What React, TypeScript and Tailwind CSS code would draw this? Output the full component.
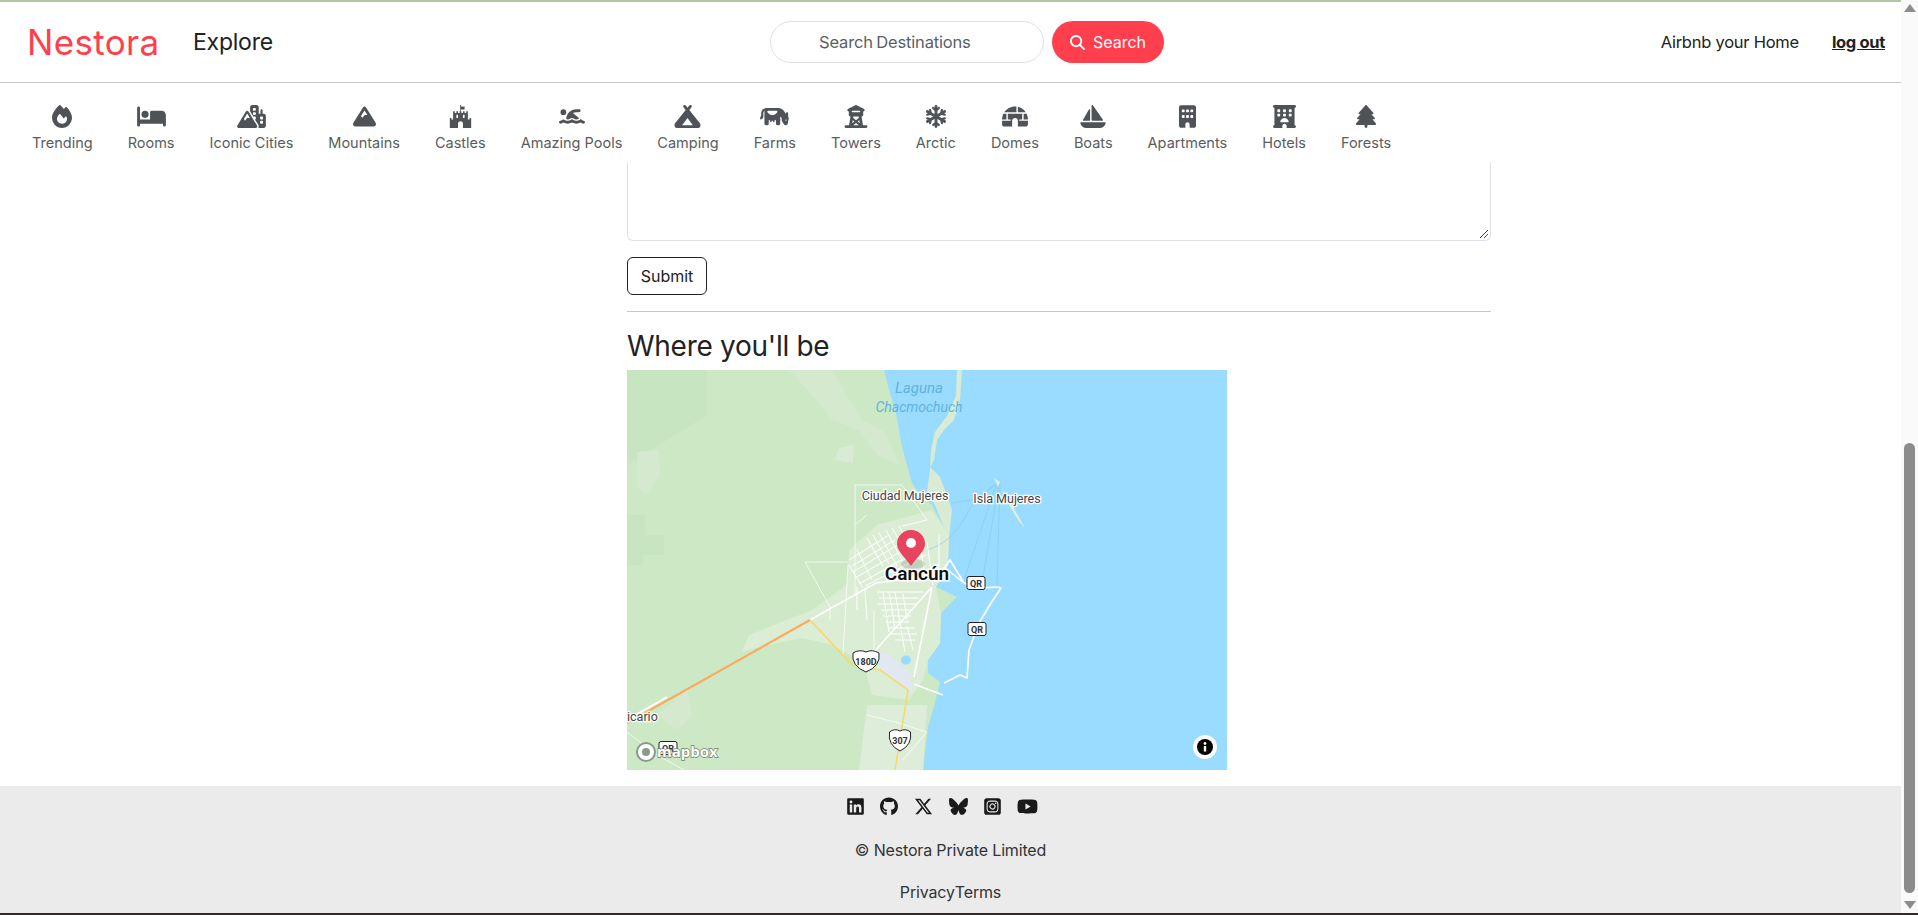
import React from "react";
import {
  FaFire, FaBed, FaMountainCity, FaMountain, FaFortAwesome, FaPersonSwimming, FaCampground, FaCow,
  FaTowerObservation, FaSnowflake, FaIgloo, FaSailboat, FaBuilding, FaHotel, FaTree, FaMagnifyingGlass,
  FaLinkedin, FaGithub, FaXTwitter, FaBluesky, FaSquareInstagram, FaYoutube,
} from "react-icons/fa6";

const cats: [React.ComponentType<{ className?: string }>, string, string][] = [
  [FaFire, "Trending", "w-[20px]"], [FaBed, "Rooms", "w-[29px]"], [FaMountainCity, "Iconic Cities", "w-[29px]"], [FaMountain, "Mountains", "w-[23px]"],
  [FaFortAwesome, "Castles", "w-[23px]"], [FaPersonSwimming, "Amazing Pools", "w-[26px]"], [FaCampground, "Camping", "w-[29px]"], [FaCow, "Farms", "w-[29px]"],
  [FaTowerObservation, "Towers", "w-[26px]"], [FaSnowflake, "Arctic", "w-[20px]"], [FaIgloo, "Domes", "w-[26px]"], [FaSailboat, "Boats", "w-[26px]"],
  [FaBuilding, "Apartments", "w-[17px]"], [FaHotel, "Hotels", "w-[23px]"], [FaTree, "Forests", "w-[20px]"],
];

const grid = [
  "M222 190 L262 165", "M225 196 L268 170", "M226 202 L272 174", "M228 208 L280 178", "M232 214 L292 180", "M238 216 L300 184",
  "M240 168 L256 196", "M246 165 L262 194", "M252 163 L270 196", "M259 160 L276 192", "M265 158 L285 192", "M272 156 L290 190",
  "M230 180 L245 210", "M222 195 L236 218", "M275 156 L300 150", "M300 172 L306 215", "M312 165 L312 205", "M292 168 L298 205",
  "M250 222 L296 222", "M252 228 L292 228", "M250 234 L290 234", "M254 240 L286 240", "M256 246 L284 246", "M258 252 L282 252",
  "M262 258 L288 258", "M264 264 L290 264", "M268 270 L288 270", "M256 222 L262 262", "M262 222 L268 258", "M268 222 L274 258",
  "M276 224 L280 250", "M280 256 L286 280", "M274 260 L278 282", "M230 217 V240", "M238 220 L240 250",
];

function MapArt() {
  return (
    <svg viewBox="0 0 600 400" className="block w-[600px] h-[400px]">
      <rect width="600" height="400" fill="#9adcff" />
      <path d="M0 0H257L262 20L269 43L275 77L285 113L293 125L305 135L313 150L322 165L321 195L309 217L330 227L314 243L313 273L301 290L301 303L313 312L308 333L301 357L296 400H0Z" fill="#cce8c5" />
      <path d="M330 0H335L333 30L327 50L317 60L310 70L307 90L303 97L313 107L319 123L325 140L323 157L322 170L308 135L300 122L303 100L304 80L308 62L320 46L329 26Z" fill="#d9ecd3" />
      <path d="M0 0H80V45L0 95Z" fill="#c8e5c1" />
      <path d="M0 145H18V165H37V185H16V195H0Z" fill="#c8e5c1" />
      <path d="M162 0H205L235 50L258 62L272 95L250 85L232 60L205 50L185 25Z" fill="#d5e9cf" />
      <path d="M212 78L227 75L226 93L208 90Z" fill="#d9ebd5" />
      <path d="M10 82L32 80L33 105L18 127L10 115Z" fill="#d5e9cf" />
      <path d="M222 180L250 155L305 140L322 165L321 195L309 217L314 243L313 273L301 290L296 310L282 330L245 325L236 292L205 275L175 268L140 275L115 282L122 265L185 240L220 215Z" fill="#dcedd6" />
      <path d="M240 335L300 335L296 400H232L235 375Z" fill="#deedd9" />
      <path d="M30 345L60 320L65 345L50 360Z" fill="#d5e9cf" />
      <ellipse cx="279" cy="290" rx="5" ry="4.5" fill="#9adcff" />
      <ellipse cx="309" cy="297" rx="7" ry="11" fill="#9adcff" />
      <path d="M300 180C315 175 328 168 345 135L370 113" fill="none" stroke="#86c9ee" strokeWidth="0.7" />
      <path d="M370 113L337 210M372 113L356 207M373 113L370 217M371 113L345 130L325 133" fill="none" stroke="#86c9ee" strokeWidth="0.6" />
      <path d="M367 108L371 117L373 112ZM375 120L381 128L398 158L391 150L378 128Z" fill="#dff0d8" />
      <path d="M253 283L262 284L285 305V322L280 320L253 298Z" fill="#e1e8f1" />
      <g fill="none" stroke="#ffffff" strokeWidth="0.8" opacity="0.9">
        <path d="M228 115H275L300 150M228 115V225M228 155L240 145M178 192H221M178 192L203 237V250M221 195L216 285M247 240V282" />
        <path d="M276 390L300 362L268 352L240 345M0 362L30 385L57 400" />
      </g>
      <g fill="none" stroke="#ffffff" strokeWidth="1">
        {grid.map((d) => <path key={d} d={d} />)}
      </g>
      <g fill="none" stroke="#ffffff" strokeWidth="1.6" strokeLinejoin="round">
        <path d="M183 250L249 213L312 205L323 190L337 213" />
        <path d="M247 282L305 217M287 307L305 217M287 314L316 325" />
        <path d="M317 197L337 213C348 218 360 218 370 217L374 218L364 233L352 253L342 280L340 308L333 305L317 313" />
      </g>
      <path d="M0 350L40 327" fill="none" stroke="#ffffff" strokeWidth="2" />
      <path d="M0 353L183 250" fill="none" stroke="#fbab60" strokeWidth="2.2" />
      <path d="M183 250L225 295L253 300L281 320L268 400" fill="none" stroke="#fdd663" strokeWidth="1.5" />
      <g fontFamily="Roboto, sans-serif">
        <g fill="#5fb3dd" fontStyle="italic" textAnchor="middle">
          <text x="292" y="23" fontSize="15">Laguna</text>
          <text x="292" y="42" fontSize="14">Chacmochuch</text>
        </g>
        <g fontSize="12.5" textAnchor="middle" fill="#444" stroke="#fff" strokeWidth="2.5" paintOrder="stroke">
          <text x="278" y="130">Ciudad Mujeres</text>
          <text x="380" y="133">Isla Mujeres</text>
          <text x="0" y="351" textAnchor="start">icario</text>
        </g>
        <text x="290" y="210" fontSize="19" fontWeight="600" textAnchor="middle" fill="#111" stroke="#fff" strokeWidth="3" paintOrder="stroke">Cancún</text>
        {[[349, 213], [350, 259], [41, 378]].map(([x, y]) => (
          <g key={x}>
            <rect x={x - 9} y={y - 6.5} width="18" height="13" rx="2" fill="#fff" stroke="#222" />
            <text x={x} y={y + 3.5} fontSize="9" fontWeight="700" textAnchor="middle" fill="#333">QR</text>
          </g>
        ))}
        {[[239, 292, "180D", 26], [273, 371, "307", 21]].map(([x, y, t, w]) => {
          const cx = x as number, cy = y as number, wd = w as number;
          return (
            <g key={t as string}>
              <path d={`M${cx - wd / 2} ${cy - 9}Q${cx - wd / 4} ${cy - 13} ${cx} ${cy - 10}Q${cx + wd / 4} ${cy - 13} ${cx + wd / 2} ${cy - 9}Q${cx + wd / 2 + 2} ${cy + 4} ${cx} ${cy + 10}Q${cx - wd / 2 - 2} ${cy + 4} ${cx - wd / 2} ${cy - 9}Z`} fill="#fff" stroke="#222" />
              <text x={cx} y={cy + 3} fontSize="9" fontWeight="700" textAnchor="middle" fill="#333">{t}</text>
            </g>
          );
        })}
      </g>
      <ellipse cx="286" cy="194" rx="12" ry="5" fill="#000" opacity="0.12" />
      <path d="M284 196C278 187 270 181 270 174A14 14 0 0 1 298 174C298 181 290 187 284 196Z" fill="#e8435f" />
      <circle cx="284" cy="173" r="5" fill="#fff" />
      <circle cx="19" cy="382" r="9" fill="#fff" stroke="#8a9a88" strokeWidth="2" />
      <circle cx="19" cy="382" r="4" fill="#8a9a88" />
      <text x="30" y="387" fontSize="15" fontWeight="700" fontFamily="'Open Sans', sans-serif" fill="#fff" stroke="#6e7f6c" strokeWidth="1.4" paintOrder="stroke">mapbox</text>
      <circle cx="578" cy="377" r="12" fill="#fff" />
      <circle cx="578" cy="377" r="8" fill="#000" />
      <rect x="576.8" y="376" width="2.4" height="5.5" fill="#fff" />
      <circle cx="578" cy="373.5" r="1.4" fill="#fff" />
    </svg>
  );
}

export default function App() {
  return (
    <div className="h-[915px] overflow-hidden flex flex-col bg-white text-[#222] font-['Inter','Liberation_Sans',sans-serif]">
      <div className="h-[913px] flex">
        <div className="w-[1901px] flex flex-col">
          <div className="h-[2px] bg-[#b4c6a8]" />
          <header className="h-[81px] shrink-0 border-b border-[#c8c8c8] flex items-center pl-[27px] pr-[16px]">
            <a className="text-[35px] leading-none text-[#ff3f4e] w-[166px] tracking-[0.01em]">Nestora</a>
            <a className="text-[23px] text-[#222] w-[577px] tracking-[-0.01em]">Explore</a>
            <div className="w-[274px] h-[42px] rounded-full border border-[#dee2e6] flex items-center pl-[48px] text-[16.5px] text-[#5a5f66] tracking-[-0.01em] [word-spacing:-1px]">Search Destinations</div>
            <button className="ml-[8px] w-[112px] h-[42px] rounded-full bg-[#ff3f4e] text-white text-[16px] flex items-center justify-center gap-[8px]">
              <FaMagnifyingGlass className="w-[15px] h-[15px]" />Search
            </button>
            <a className="ml-auto text-[16.5px] text-[#222] tracking-[-0.015em]">Airbnb your Home</a>
            <a className="ml-[33px] text-[16.5px] font-bold underline text-[#222] tracking-[-0.02em]">log out</a>
          </header>
          <nav className="h-[79px] shrink-0 flex items-start pl-[32px] pt-[22px] gap-[35px]">
            {cats.map(([Icon, label, w]) => (
              <div key={label} className="flex flex-col items-center gap-[6px] text-[#5a5d60] text-[14.5px] leading-[17px] whitespace-nowrap">
                <Icon className={`${w} h-[23px] text-[#4f5357]`} />
                {label}
              </div>
            ))}
          </nav>
          <main className="flex-1 pl-[627px] w-[1491px]">
            <div className="h-[79px] border border-t-0 border-[#dee2e6] rounded-b-[6px] relative">
              <svg className="absolute right-[1px] bottom-[1px] w-[12px] h-[12px]" viewBox="0 0 12 12"><path d="M11 3L3 11M11 7L7 11" stroke="#444" strokeWidth="1" /></svg>
            </div>
            <button className="mt-[16px] block w-[80px] h-[38px] rounded-[6px] border border-[#222] text-[16px] text-[#222]">Submit</button>
            <div className="mt-[16px] border-t border-[#c8c8c8]" />
            <h2 className="mt-[16px] text-[28px] leading-[36px] text-[#222] tracking-[-0.01em]">Where you'll be</h2>
            <div className="mt-[6px] w-[600px] h-[400px]"><MapArt /></div>
          </main>
          <footer className="h-[127px] shrink-0 bg-[#ebebeb] flex flex-col items-center text-[16px] text-[#333]">
            <div className="mt-[11px] mr-[16px] flex items-center gap-[16px] text-[#1a1a1a]">
              <FaLinkedin className="w-[17px] h-[19px]" />
              <FaGithub className="w-[18px] h-[19px]" />
              <FaXTwitter className="w-[19px] h-[19px]" />
              <FaBluesky className="w-[19px] h-[19px]" />
              <FaSquareInstagram className="w-[17px] h-[19px]" />
              <FaYoutube className="w-[21px] h-[19px]" />
            </div>
            <p className="mt-[22px] leading-[24px] tracking-[-0.01em]">© Nestora Private Limited</p>
            <div className="mt-[18px] leading-[24px] flex tracking-[-0.01em]"><a>Privacy</a><a>Terms</a></div>
          </footer>
        </div>
        <div className="w-[17px] bg-[#fafafa] flex flex-col items-center py-[4px]">
          <div className="w-0 h-0 border-x-[6px] border-x-transparent border-b-[8px] border-b-[#8c8c8c]" />
          <div className="flex-1" />
          <div className="w-[11px] h-[450px] rounded-full bg-[#8c8c8c] mb-[8px]" />
          <div className="w-0 h-0 border-x-[6px] border-x-transparent border-t-[8px] border-t-[#8c8c8c]" />
        </div>
      </div>
      <div className="h-[2px] bg-[#33292b]" />
    </div>
  );
}
